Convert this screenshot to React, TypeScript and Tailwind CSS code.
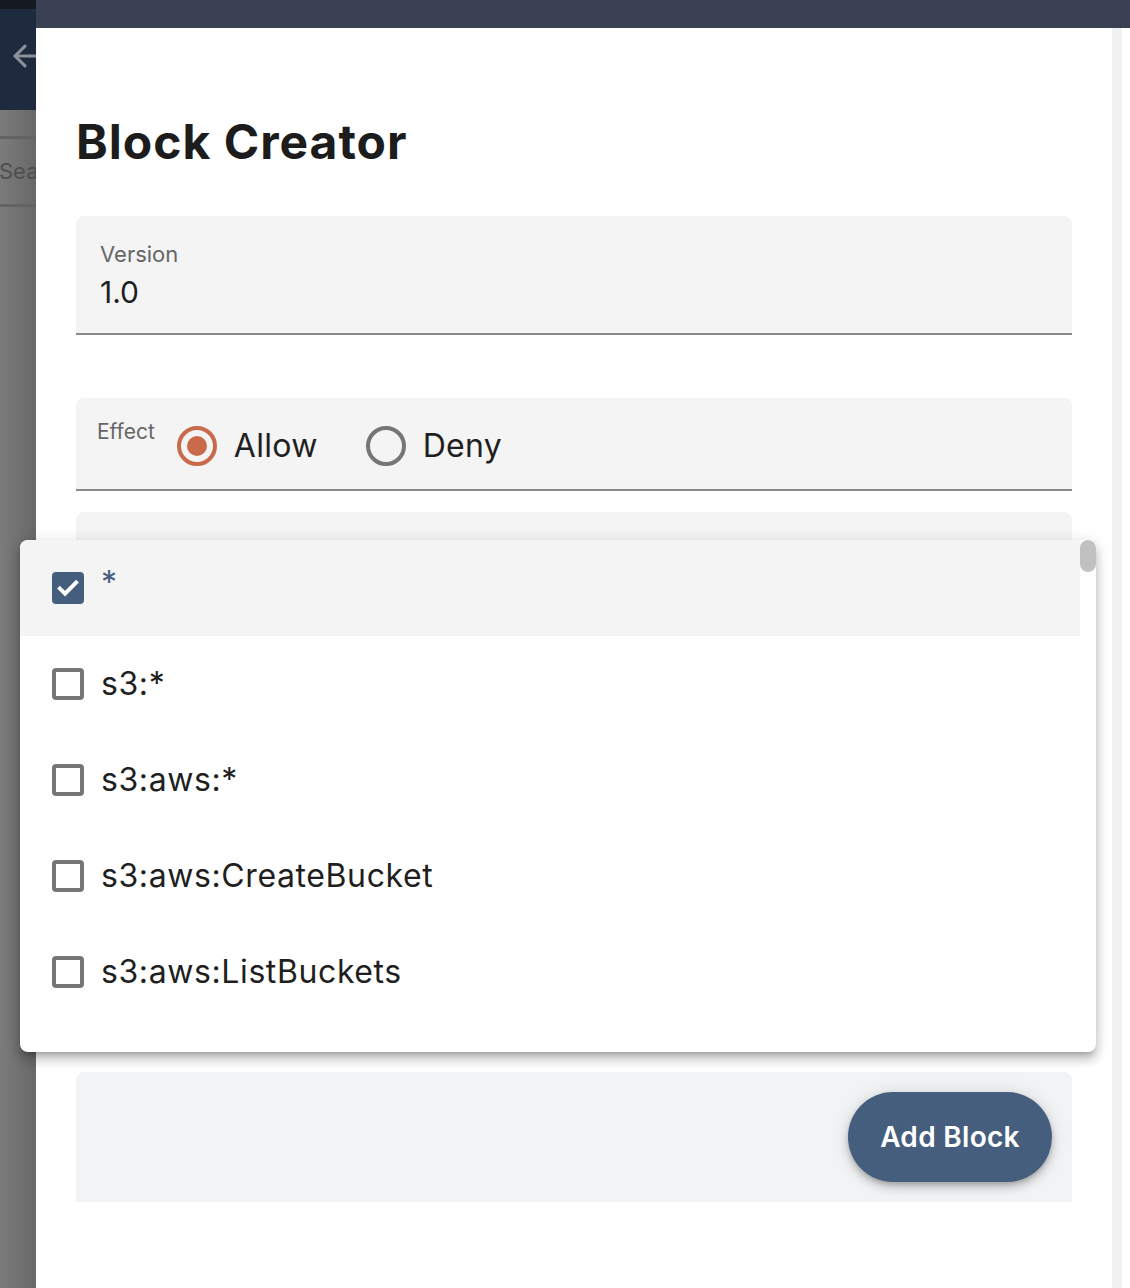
import React from "react";
import { ArrowLeft } from "lucide-react";

const items = ["*", "s3:*", "s3:aws:*", "s3:aws:CreateBucket", "s3:aws:ListBuckets"];

function CheckIcon() {
  return (
    <svg width="26" height="26" viewBox="0 0 24 24" fill="none">
      <path d="M4.5 12.5l4.8 4.8L19.5 7" stroke="white" strokeWidth="3.6" strokeLinecap="square" />
    </svg>
  );
}

export default function App() {
  return (
    <div className="relative w-[1130px] h-[1288px] overflow-hidden bg-white font-['Inter',sans-serif]">
      <div className="flex h-full">
        {/* left backdrop strip */}
        <div className="w-[36px] h-full flex flex-col overflow-hidden shrink-0">
          <div className="h-[9px] bg-[#141922]" />
          <div className="h-[101px] bg-[#1e2a3d] relative">
            <ArrowLeft className="absolute left-[8px] top-[30px] text-[#8b9099]" size={34} strokeWidth={2.2} />
          </div>
          <div className="flex-1 bg-gradient-to-r from-[#7b7b7b] to-[#686868] flex flex-col">
            <div className="h-[26px]" />
            <div className="h-[3px] bg-[#626262]" />
            <div className="h-[65px] flex items-center text-[22px] text-[#4e4e4e] -ml-[1px] whitespace-nowrap">Sea</div>
            <div className="h-[3px] bg-[#626262]" />
          </div>
        </div>
        {/* main */}
        <div className="flex-1 flex flex-col h-full">
          <div className="h-[28px] bg-[#3a4152] shrink-0" />
          <div className="flex flex-1">
            <div className="w-[1076px] bg-white px-[40px] flex flex-col">
              <h1 className="mt-[80px] text-[48px] leading-[68px] font-bold text-[#1c1c1c] tracking-[1px]">Block Creator</h1>
              <div className="mt-[40px] h-[119px] bg-[#f4f4f4] rounded-t-[8px] border-b-[2px] border-[#8a8a8a] px-[24px] pt-[24px]">
                <div className="text-[22px] leading-[28px] text-[#666]">Version</div>
                <div className="text-[30px] leading-[40px] text-[#1f1f1f] mt-[4px]">1.0</div>
              </div>
              <div className="mt-[63px] h-[93px] bg-[#f4f4f4] rounded-t-[8px] border-b-[2px] border-[#8a8a8a] pl-[21px] flex items-start">
                <div className="mt-[21px] text-[21px] leading-[26px] text-[#666]">Effect</div>
                <div className="ml-[22px] mt-[28px] flex items-center">
                  <div className="w-[40px] h-[40px] rounded-full border-[4px] border-[#c96a4c] flex items-center justify-center">
                    <div className="w-[20px] h-[20px] rounded-full bg-[#c96a4c]" />
                  </div>
                  <span className="ml-[17px] text-[32px] leading-[40px] text-[#1f1f1f] tracking-[0.3px]">Allow</span>
                  <div className="ml-[48px] w-[40px] h-[40px] rounded-full border-[4px] border-[#767676]" />
                  <span className="ml-[17px] text-[32px] leading-[40px] text-[#1f1f1f] tracking-[0.3px]">Deny</span>
                </div>
              </div>
              <div className="mt-[21px] h-[120px] bg-[#f4f4f4] rounded-t-[8px] border-b-[2px] border-[#8a8a8a] px-[24px] pt-[24px]">
                <div className="text-[22px] leading-[28px] text-[#666]">Actions</div>
              </div>
              <div className="h-[440px]" />
              <div className="h-[130px] bg-[#f2f3f5] rounded-t-[8px] flex items-start justify-end pr-[20px] pt-[20px]">
                <button className="w-[204px] h-[90px] rounded-full bg-[#465e7e] text-white text-[28px] font-semibold tracking-[0.3px] shadow-[0_3px_5px_-1px_rgba(0,0,0,0.2),0_6px_10px_0_rgba(0,0,0,0.14),0_1px_18px_0_rgba(0,0,0,0.12)]">
                  Add Block
                </button>
              </div>
            </div>
            <div className="w-[10px] bg-[#f0f1f3]" />
            <div className="flex-1 bg-white" />
          </div>
        </div>
      </div>

      {/* dropdown menu */}
      <div className="absolute left-[20px] top-[540px] w-[1076px] h-[512px] bg-white rounded-[8px] overflow-hidden shadow-[0_5px_5px_-3px_rgba(0,0,0,0.2),0_8px_10px_1px_rgba(0,0,0,0.14),0_3px_14px_2px_rgba(0,0,0,0.12)] flex">
        <div className="flex-1 flex flex-col">
          {items.map((it, i) => (
            <div key={it} className={`h-[96px] flex items-center pl-[32px] ${i === 0 ? "bg-[#f4f4f4]" : ""}`}>
              {i === 0 ? (
                <div className="w-[32px] h-[32px] rounded-[4px] bg-[#465e7e] flex items-center justify-center">
                  <CheckIcon />
                </div>
              ) : (
                <div className="w-[32px] h-[32px] rounded-[4px] border-[4px] border-[#767676]" />
              )}
              <span className={`ml-[17px] text-[32px] leading-[40px] tracking-[0.6px] ${i === 0 ? "text-[#465e7e] -mt-[10px]" : "text-[#1f1f1f]"}`}>{it}</span>
            </div>
          ))}
        </div>
        <div className="w-[16px] relative">
          <div className="absolute left-0 top-0 w-[16px] h-[32px] rounded-full bg-[#c1c1c1]" />
        </div>
      </div>
    </div>
  );
}
